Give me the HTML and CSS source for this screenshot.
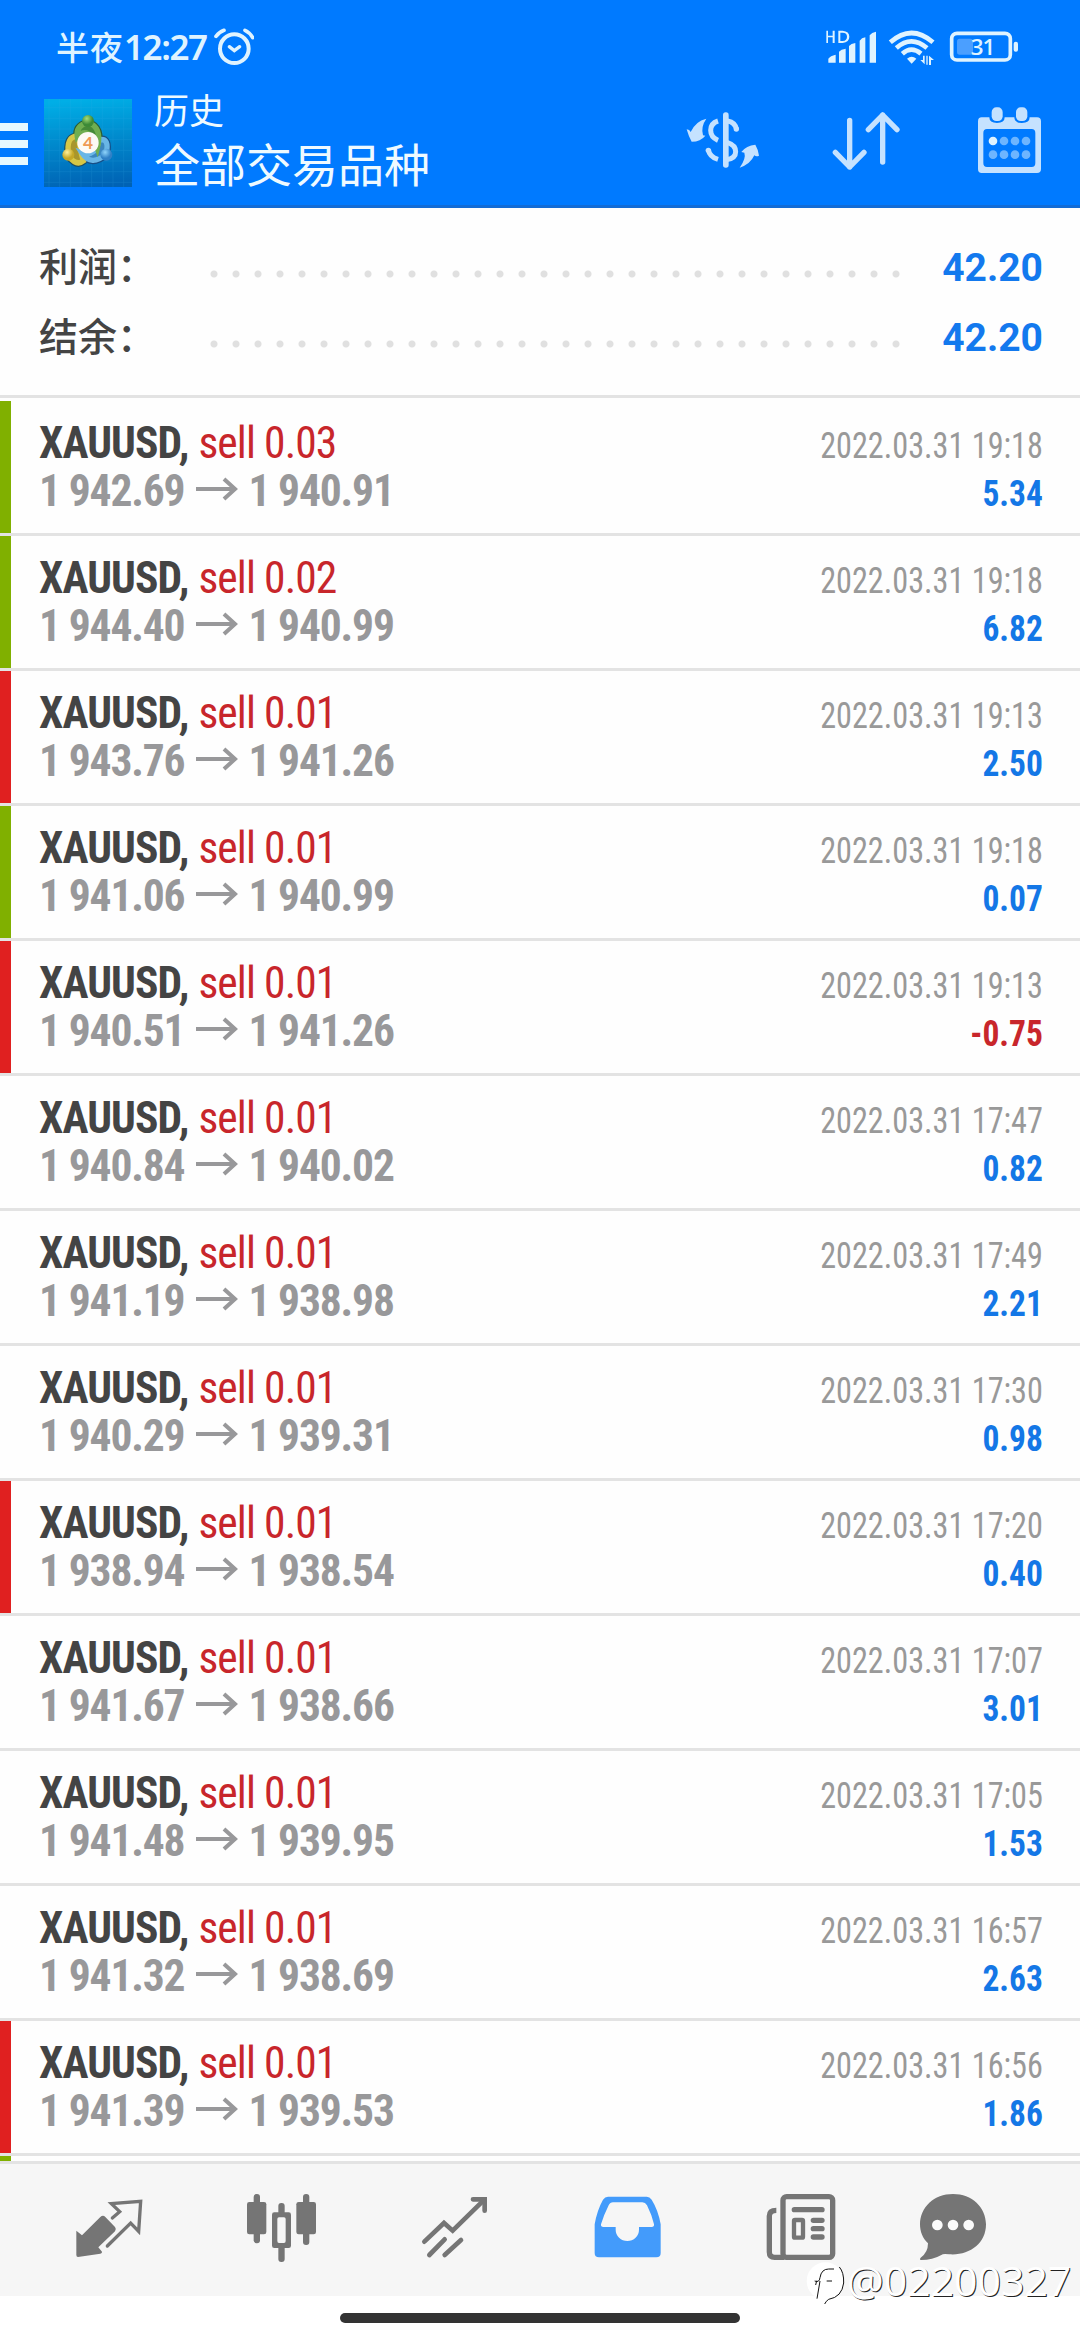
FILE: index.html
```
<!DOCTYPE html>
<html lang="zh-CN">
<head>
<meta charset="utf-8">
<title>历史</title>
<link rel="stylesheet" href="styles.css">
</head>
<body>
<header class="header">
  <div class="status">
    <span class="clock"><span class="clock-cjk">半夜</span><span class="clock-num">12:27</span></span>
    <svg class="alarm" width="40" height="40" viewBox="553 50 120 120" fill="none" stroke="#dff3ff" stroke-linecap="round">
      <circle cx="614" cy="115" r="43" stroke-width="12"/>
      <path d="M559 78 Q570 64 583 60M669 82 Q660 66 646 60" stroke-width="11"/>
      <path d="M599 109 L614 121 L630 109" stroke-width="10"/>
    </svg>
    <svg class="sys" width="204" height="48" viewBox="540 70 612 144" fill="#dff3ff">
      <path d="M556 93h5v15h14V93h6v37h-6v-17h-14v17h-5zM592 93h13q20 2 20 18t-20 19h-13zm6 6v25h7q13-1 13-13t-13-12z"/>
      <path d="M562 189v-12q6-9 22-12v24zM594 189v-33q6-7 20-9v42zM624 189v-50q6-8 19-9v59zM656 189v-66q6-9 17-10v76zM686 189v-82q6-9 19-11v93z"/>
      <g fill="none" stroke="#dff3ff" stroke-width="14">
        <path d="M748 128Q811 72 876 128"/><path d="M766 145Q811 105 858 145"/><path d="M784 162Q811 138 840 162"/>
      </g>
      <path d="M798 177q14-11 28 0l-14 15z"/>
      <path d="M846 168h5v26l-13-13h8zM856 168h4v27h-4zM864 196v-28l15 13h-9v15z"/>
      <rect x="932" y="101" width="176" height="80" rx="16" fill="none" stroke="#dff3ff" stroke-width="11"/>
      <rect x="1118" y="126" width="13" height="30" rx="6"/>
      <rect x="948" y="117" width="48" height="48" rx="8" fill="#4b9fff"/>
      <text x="989" y="167" class="battery">31</text>
    </svg>
  </div>
  <div class="appbar">
    <div class="menu"><i></i><i></i><i></i></div>
    <svg class="logo" width="88" height="88" viewBox="42 264 264 264">
      <defs>
        <linearGradient id="sky" x1="0.5" y1="0" x2="0.6" y2="1"><stop offset="0" stop-color="#00aee6"/><stop offset=".5" stop-color="#0087cb"/><stop offset="1" stop-color="#0062b4"/></linearGradient>
        <radialGradient id="green" cx=".4" cy=".3"><stop offset="0" stop-color="#a5dc78"/><stop offset="1" stop-color="#3d8a36"/></radialGradient>
        <radialGradient id="gold" cx=".4" cy=".3"><stop offset="0" stop-color="#fff09a"/><stop offset="1" stop-color="#c5a827"/></radialGradient>
        <radialGradient id="blue" cx=".4" cy=".3"><stop offset="0" stop-color="#8fd4fa"/><stop offset="1" stop-color="#2f80c6"/></radialGradient>
      </defs>
      <rect x="42" y="264" width="264" height="264" fill="url(#sky)"/>
      <path d="M57 264v264M89 264v264M121 264v264M153 264v264M185 264v264M217 264v264M249 264v264M281 264v264M42 290h264M42 322h264M42 354h264M42 386h264M42 418h264M42 450h264M42 482h264M42 514h264" stroke="#3fb0e8" stroke-width="2" opacity=".22"/>
      <g fill="none" stroke-linecap="round">
        <path d="M116 436Q106 372 146 376Q150 420 160 450Q140 466 116 436" stroke="#1d4f63" stroke-width="23"/>
        <path d="M228 430Q240 380 208 386Q196 440 156 426Q184 468 228 430" stroke="#174e86" stroke-width="23"/>
        <path d="M174 334Q136 344 142 378Q176 340 202 412Q218 350 174 334" stroke="#2a5b35" stroke-width="23"/>
        <path d="M116 436Q106 372 146 376Q150 420 160 450Q140 466 116 436" stroke="#d6c746" stroke-width="16" fill="#a8962c"/>
        <path d="M228 430Q240 380 208 386Q196 440 156 426Q184 468 228 430" stroke="#69b6e6" stroke-width="16" fill="#3b86bf"/>
        <path d="M174 334Q136 344 142 378Q176 340 202 412Q218 350 174 334" stroke="#6fae50" stroke-width="16" fill="#468a38"/>
      </g>
      <circle cx="174" cy="330" r="18" fill="url(#green)"/>
      <circle cx="115" cy="431" r="18" fill="url(#gold)"/>
      <circle cx="229" cy="431" r="18" fill="url(#blue)"/>
      <circle cx="174" cy="395" r="32" fill="#fdfaf5"/>
      <text x="174" y="414" class="four">4</text>
    </svg>
    <div class="titles"><div class="sub">历史</div><div class="main">全部交易品种</div></div>
    <div class="actions">
      <svg viewBox="126 310 240 240" fill="#c5e2ff">
        <path d="M137 389q9 0 12 8q14-32 47-40q-17 24-10 50l7 1q-14 18-41 18q-9-15-15-37z"/>
        <path d="M354 468q-8 4-14-1q-12 27-44 37q20-28 14-45l-9-2q15-20 42-22q8 13 11 33z"/>
        <rect x="246" y="338" width="17" height="166" rx="8"/>
        <g fill="none" stroke="#c5e2ff" stroke-width="15"><path d="M231 364Q209 371 209 392Q209 413 231 422"/><path d="M202 449Q205 471 231 479" /><path d="M260 364Q283 368 287 390M258 428Q284 436 284 456Q284 475 258 480"/></g>
        <circle cx="286" cy="388" r="8"/><circle cx="202" cy="452" r="8"/>
      </svg>
      <svg viewBox="555 310 240 240" fill="none" stroke="#c5e2ff" stroke-width="16" stroke-linecap="round" stroke-linejoin="round">
        <path d="M626 362V502M583 458L626 502L669 458M725 487V346M682 390L725 346L768 390"/>
      </svg>
      <svg viewBox="984 310 240 240" fill="#c5e2ff">
        <path fill-rule="evenodd" d="M1022 353h23q0 17 23 17t23-17h29q0 17 23 17t23-17h22q12 0 12 12v143q0 12-12 12h-166q-11 0-11-12V365q0-12 11-12zM1038 388q-11 0-11 12v90q0 12 11 12h134q11 0 11-12v-90q0-12-11-12z"/>
        <rect x="1052" y="323" width="33" height="41" rx="14"/><rect x="1125" y="323" width="34" height="41" rx="14"/>
        <circle cx="1056" cy="424" r="13" fill="#dff3ff"/>
        <g fill="#6db5ff"><circle cx="1089" cy="424" r="13"/><circle cx="1122" cy="424" r="13"/><circle cx="1155" cy="424" r="13"/><circle cx="1056" cy="465" r="13"/><circle cx="1089" cy="465" r="13"/><circle cx="1122" cy="465" r="13"/><circle cx="1155" cy="465" r="13"/></g>
      </svg>
    </div>
  </div>
</header>

<section class="summary">
  <div class="sum-row"><span class="label">利润：</span><span class="dots"></span><span class="total">42.20</span></div>
  <div class="sum-row"><span class="label">结余：</span><span class="dots"></span><span class="total">42.20</span></div>
</section>

<main class="deals" id="deals"></main>

<nav class="tabs">
  <div class="tab"><svg viewBox="25 24 240 240">
    <path d="M47 152l17 14l55-55q8-7 15 0l29 30q5 6 0 13l-50 48l11 13q1 5-5 6l-67 10q-5 0-5-6z" fill="#757575"/>
    <path d="M155 114L177 95L152 71L240 64L234 154L210 129L140 198" fill="none" stroke="#757575" stroke-width="10" stroke-linecap="round"/>
  </svg></div>
  <div class="tab"><svg viewBox="545 24 240 240" fill="#757575">
    <rect x="580" y="42" width="19" height="148" rx="9"/><rect x="560" y="66" width="58" height="97" rx="7"/>
    <rect x="728" y="42" width="19" height="153" rx="9"/><rect x="708" y="66" width="59" height="97" rx="7"/>
    <rect x="654" y="69" width="19" height="40" rx="9"/><rect x="654" y="192" width="19" height="54" rx="9"/>
    <path fill-rule="evenodd" d="M642 97h43q7 0 7 7v93q0 7-7 7h-43q-7 0-7-7v-93q0-7 7-7zM656 112q-5 0-5 5v66q0 6 5 6h15q5 0 5-6v-66q0-5-5-5z"/>
  </svg></div>
  <div class="tab"><svg viewBox="1064 24 240 240" fill="none" stroke="#757575" stroke-width="14" stroke-linecap="round">
    <path d="M1092 185L1151 129L1177 152L1269 62"/><path d="M1107 225L1153 178M1153 225L1202 180"/><path d="M1238 58H1273V92" />
  </svg></div>
  <div class="tab"><svg viewBox="24 24 240 240">
    <path fill="#439bfb" fill-rule="evenodd" d="M84 50h116q9 0 15 9q20 32 27 74v86q0 13-13 13H57q-13 0-13-13v-86q7-42 25-74q6-9 15-9zM99 67q-9 0-13 9q-15 30-23 57q-1 8 7 8h37v8a35 34 0 0 0 70 0v-8h38q8 0 7-8q-6-27-21-57q-5-9-14-9z"/>
  </svg></div>
  <div class="tab"><svg viewBox="543 24 240 240">
    <g fill="none" stroke="#757575"><rect x="609" y="50" width="149" height="182" rx="11" stroke-width="16"/><path d="M589 91Q568 91 568 108V216Q568 232 584 232H612" stroke-width="16"/><rect x="642" y="120" width="27" height="53" rx="3" stroke-width="13"/><path d="M643 89H726M700 121H726M700 146H726M700 171H726" stroke-width="16" stroke-linecap="round"/></g>
  </svg></div>
  <div class="tab last"><svg viewBox="999 24 240 240">
    <path d="M1119 42C1176 42 1218 82 1218 133C1218 192 1166 228 1107 223Q1089 220 1084 225Q1058 240 1023 240Q1017 239 1022 233Q1044 218 1044 190C1028 175 1020 155 1020 133C1020 82 1062 42 1119 42z" fill="#757575"/>
    <g fill="#fbfbfb"><circle cx="1072" cy="135" r="16"/><circle cx="1119" cy="135" r="16"/><circle cx="1166" cy="135" r="16"/></g>
  </svg></div>
</nav>
<footer class="gesture"><div class="pill"></div></footer>

<div class="watermark">
  <svg width="46" height="46" viewBox="12 34 138 138">
    <circle cx="76" cy="94" r="56" fill="#fff"/>
    <path d="M44 94Q58 100 60 84Q64 58 86 58H102M60 94L51 147M80 94H96M50 93L47 106" fill="none" stroke="#111" stroke-width="3"/>
    <path d="M118 52Q132 68 131 100Q126 142 86 149Q78 154 74 163" fill="none" stroke="#111" stroke-width="3"/>
  </svg>
  <span>@02200327</span>
</div>
<script src="app.js"></script>
</body>
</html>
```
FILE: styles.css
```
* { box-sizing: border-box; }
body {
  margin: 0;
  width: 1080px;
  height: 2340px;
  overflow: hidden;
  position: relative;
  background: #fefefe;
  font-family: Roboto, "Noto Sans CJK SC", sans-serif;
}
svg { display: block; flex: none; }

.header { height: 208px; background: #007aff; border-bottom: 3px solid #126cd6; color: #effaff; }
.status { height: 80px; display: flex; align-items: flex-start; padding-left: 56px; color: #dff3ff; }
.clock { display: flex; align-items: baseline; margin-top: 22px; width: 158px; line-height: 48px; white-space: nowrap; }
.clock-cjk { font: 500 33px/48px "Noto Sans CJK SC", sans-serif; letter-spacing: 1px; }
.clock-num { font: 600 35px/48px "Noto Sans", sans-serif; letter-spacing: -1.4px; }
.alarm { margin-top: 27px; }
.sys { margin: 23px 55px 0 auto; }
.battery { font: 600 67px "Open Sans", sans-serif; letter-spacing: -3px; }

.appbar { height: 125px; display: flex; align-items: center; }
.menu { width: 28px; display: grid; gap: 9px; margin-top: 3px; }
.menu i { height: 8px; background: #e6f8ff; }
.logo { margin-left: 16px; }
.four { font: 700 52px Lato, sans-serif; fill: #ee9a55; text-anchor: middle; }
.titles { margin: 0 0 8px 22px; font-family: "Noto Sans CJK SC", sans-serif; flex: 1; }
.sub { font-size: 35px; line-height: 47px; }
.main { font-size: 46px; line-height: 60px; }
.actions { display: flex; }
.actions svg { width: 80px; height: 80px; margin: 1px 31.5px 0; }

.summary { height: 187px; padding: 24px 37px 0 39px; }
.sum-row { height: 70px; display: flex; align-items: center; }
.label { width: 164px; font: 500 39px/70px "Noto Sans CJK SC", sans-serif; color: #444; white-space: nowrap; margin-top: -7px; }
.dots {
  width: 704px;
  height: 8px;
  margin-top: 14px;
  background: radial-gradient(circle at 50% 50%, #e0e0e0 3px, transparent 4px) 0 0 / 22px 8px repeat-x;
}
.total { margin: 2px 0 0 auto; font: 700 39px/70px Roboto, sans-serif; color: #1379ee; }

.deals { height: 1766px; border-top: 3px solid #e3e3e3; padding-top: 3px; overflow: hidden; font-family: "Roboto Condensed", sans-serif; }
.deal { height: 135px; border-bottom: 3px solid #e3e3e3; display: flex; }
.mark { width: 11px; flex: none; }
.mark.green { background: #80b000; }
.mark.red { background: #e02020; }
.left { padding: 19px 0 0 28px; line-height: 48px; font-size: 43.5px; flex: 1; white-space: nowrap; }
.right { padding: 21px 37px 0 0; line-height: 48px; font-size: 36px; text-align: right; white-space: nowrap; }
.symbol { font-weight: 700; color: #444; letter-spacing: -.9px; }
.side { color: #c8262b; letter-spacing: -.9px; }
.price { display: flex; font-weight: 700; color: #98989a; letter-spacing: -1.15px; }
.price svg { margin: 9px 9px 0 12px; }
.date { color: #999; transform: scaleX(.895); transform-origin: right; }
.profit { font-weight: 700; color: #1477e6; transform: scaleX(.93); transform-origin: right; }
.loss { color: #c8262b; }

.tabs { height: 135px; background: #f6f6f6; border-top: 3px solid #e3e3e3; padding: 24px 0 0 22px; display: flex; }
.tab { width: 173.1px; display: flex; justify-content: center; }
.tab.last { width: 131px; }
.tab svg { width: 80px; height: 80px; }
.gesture { height: 44px; padding-top: 17px; background: #fff; }
.pill { width: 400px; height: 10px; margin: 0 auto; border-radius: 5px; background: #333; }

.watermark { position: absolute; left: 804px; top: 2261px; display: flex; }
.watermark span { margin: -4px 0 0 -3px; font: 400 41px/46px "Open Sans", sans-serif; color: #fff; text-shadow: 1px 1px 0 #222; }
```
FILE: app.js
```
const deals = [
  ["green", "0.03", "1 942.69", "1 940.91", "19:18", "5.34"],
  ["green", "0.02", "1 944.40", "1 940.99", "19:18", "6.82"],
  ["red", "0.01", "1 943.76", "1 941.26", "19:13", "2.50"],
  ["green", "0.01", "1 941.06", "1 940.99", "19:18", "0.07"],
  ["red", "0.01", "1 940.51", "1 941.26", "19:13", "-0.75"],
  ["", "0.01", "1 940.84", "1 940.02", "17:47", "0.82"],
  ["", "0.01", "1 941.19", "1 938.98", "17:49", "2.21"],
  ["", "0.01", "1 940.29", "1 939.31", "17:30", "0.98"],
  ["red", "0.01", "1 938.94", "1 938.54", "17:20", "0.40"],
  ["", "0.01", "1 941.67", "1 938.66", "17:07", "3.01"],
  ["", "0.01", "1 941.48", "1 939.95", "17:05", "1.53"],
  ["", "0.01", "1 941.32", "1 938.69", "16:57", "2.63"],
  ["red", "0.01", "1 941.39", "1 939.53", "16:56", "1.86"],
];
const arrow = '<svg width="43" height="24" viewBox="0 0 43 24" fill="none" stroke="#98989a" stroke-width="4"><path d="M0 12H40M28 2L39 12L28 22"/></svg>';
document.getElementById("deals").innerHTML = deals.map(([mark, lot, open, close, time, profit]) => `
  <div class="deal">
    <div class="mark ${mark}"></div>
    <div class="left">
      <div><span class="symbol">XAUUSD,</span> <span class="side">sell ${lot}</span></div>
      <div class="price"><span>${open}</span>${arrow}<span>${close}</span></div>
    </div>
    <div class="right">
      <div class="date">2022.03.31 ${time}</div>
      <div class="profit ${profit < 0 ? "loss" : ""}">${profit}</div>
    </div>
  </div>`).join("") + '<div class="deal"><div class="mark green"></div></div>';
```
